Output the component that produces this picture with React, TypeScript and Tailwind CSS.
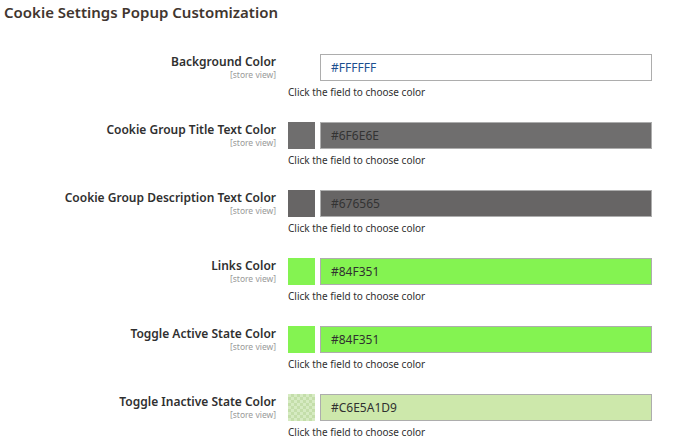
import React from "react";

const rows = [
  { label: "Background Color", value: "#FFFFFF", sw: "none", input: "bg-white text-[#1c4f8f]" },
  { label: "Cookie Group Title Text Color", value: "#6F6E6E", sw: "bg-[#6f6e6e]", input: "bg-[#6f6e6e] text-[#333]" },
  { label: "Cookie Group Description Text Color", value: "#676565", sw: "bg-[#676565]", input: "bg-[#676565] text-[#333]" },
  { label: "Links Color", value: "#84F351", sw: "bg-[#84f351]", input: "bg-[#84f351] text-[#303030]" },
  { label: "Toggle Active State Color", value: "#84F351", sw: "bg-[#84f351]", input: "bg-[#84f351] text-[#303030]" },
  { label: "Toggle Inactive State Color", value: "#C6E5A1D9", sw: "checker", input: "bg-[#cde8ab] text-[#303030]" },
];

export default function App() {
  return (
    <div className="w-[685px] h-[438px] bg-white overflow-hidden font-['Open_Sans',sans-serif] text-[#303030]">
      <h2 className="pl-[4px] pt-[1px] text-[15px] font-semibold text-[#41362f] leading-[22px]">Cookie Settings Popup Customization</h2>
      <div className="mt-[31px] flex flex-col gap-[23px]">
        {rows.map((r, i) => (
          <div key={i} className="flex">
            <div className="w-[276px] text-right pt-[1px]">
              <div className="text-[12px] font-semibold leading-[14px]">{r.label}</div>
              <div className="text-[8.5px] text-[#999] leading-[11px]">[store view]</div>
            </div>
            <div className="ml-[12px]">
              <div className="flex gap-[5px] h-[27px]">
                {r.sw === "none" ? (
                  <div className="w-[27px]" />
                ) : r.sw === "checker" ? (
                  <div className="w-[27px] bg-[repeating-conic-gradient(#c4deaa_0%_25%,#d6ebc2_0%_50%)] bg-[length:6px_6px]" />
                ) : (
                  <div className={`w-[27px] ${r.sw}`} />
                )}
                <div className={`w-[332px] border border-[#adadad] flex items-center pl-[10px] text-[12px] ${r.input}`}>{r.value}</div>
              </div>
              <div className="text-[10px] text-[#303030] mt-[5px] leading-[13px]">Click the field to choose color</div>
            </div>
          </div>
        ))}
      </div>
    </div>
  );
}
